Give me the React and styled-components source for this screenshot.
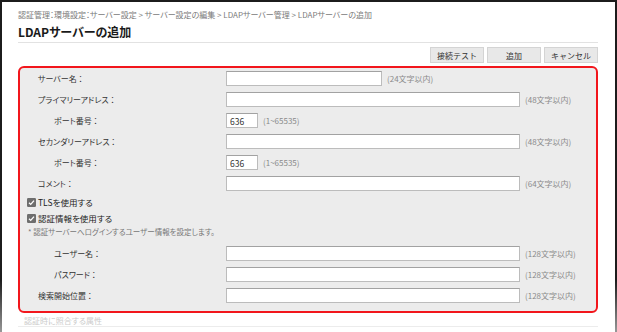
import React from 'react';
import styled, { createGlobalStyle } from 'styled-components';

const GlobalStyle = createGlobalStyle`
  html, body {
    margin: 0;
    padding: 0;
    background: #fff;
  }
  body {
    font-family: "Noto Sans CJK JP", "Noto Sans", sans-serif;
    font-feature-settings: "palt";
    color: #333;
  }
  * {
    box-sizing: border-box;
  }
`;

const Frame = styled.div`
  width: 617px;
  height: 332px;
  overflow: hidden;
  background: #fff;
  border-style: solid;
  border-width: 2px 2px 0 2px;
  border-image: linear-gradient(to bottom, #1c1c1c 84%, #9a9a9a 100%) 1;
  padding: 0 17px 0 16px;
`;

const Breadcrumb = styled.div`
  padding-top: 7px;
  font-size: 8px;
  line-height: 12px;
  color: #7a7a7a;
  white-space: nowrap;
`;

const Title = styled.h1`
  margin: 3px 0 0;
  padding-bottom: 2px;
  font-size: 12px;
  line-height: 16px;
  font-weight: bold;
  color: #1a1a1a;
  border-bottom: 1px solid #e2e2e2;
`;

const Toolbar = styled.div`
  display: flex;
  justify-content: flex-end;
  gap: 3px;
  margin-top: 4px;
`;

const Button = styled.button`
  width: 54px;
  height: 16px;
  padding: 0;
  background: #e8e8e8;
  border: 1px solid #d4d4d4;
  font-family: inherit;
  font-size: 8px;
  color: #333;
`;

const Panel = styled.div`
  margin-top: 3px;
  padding-bottom: 5px;
  background: #ececec;
  border: 2px solid #f2161c;
  border-radius: 6px;
`;

const Row = styled.div`
  display: flex;
  align-items: center;
  height: 21px;
  padding-left: 18px;
`;

const Label = styled.div`
  width: 188px;
  padding-left: ${p => (p.$indent ? 16 : 0)}px;
  font-size: 8px;
  color: #333;
  white-space: nowrap;
`;

const Field = styled.input`
  width: ${p => p.$w}px;
  height: 15px;
  margin: 0;
  padding: 0 3px;
  background: #fff;
  border: 1px solid #bcbcbc;
  border-top-color: #a2a2a2;
  font-family: inherit;
  font-size: 8.5px;
  color: #333;
  outline: none;
`;

const Hint = styled.span`
  margin-left: 5px;
  font-size: 8px;
  color: #8a8a8a;
  white-space: nowrap;
`;

const CheckRow = styled.label`
  display: flex;
  align-items: center;
  gap: 2px;
  height: 16px;
  padding-left: 7px;
  font-size: 8.5px;
  color: #222;
`;

const Note = styled.div`
  margin-bottom: 6px;
  padding-left: 8px;
  font-size: 7.5px;
  line-height: 11px;
  color: #777;
`;

const Faded = styled.div`
  margin-top: 2px;
  padding-left: 6px;
  font-size: 8px;
  line-height: 11px;
  color: #cbcbcb;
  border-bottom: 1px solid #ececec;
`;

function CheckMark() {
  return (
    <svg width="9" height="9" viewBox="0 0 9 9">
      <rect x="0" y="0" width="9" height="9" rx="1.2" fill="#6e6e6e" />
      <path d="M2 4.8 L3.7 6.4 L7 2.6" fill="none" stroke="#fff" strokeWidth="1.3" />
    </svg>
  );
}

function FieldRow({ label, indent, width, value, hint }) {
  return (
    <Row>
      <Label $indent={indent}>{label}</Label>
      <Field $w={width} defaultValue={value || ''} readOnly />
      {hint && <Hint>{hint}</Hint>}
    </Row>
  );
}

export default function App() {
  return (
    <Frame>
      <GlobalStyle />
      <Breadcrumb>
        認証管理：環境設定：サーバー設定 &gt; サーバー設定の編集 &gt; LDAPサーバー管理 &gt; LDAPサーバーの追加
      </Breadcrumb>
      <Title>LDAPサーバーの追加</Title>
      <Toolbar>
        <Button>接続テスト</Button>
        <Button>追加</Button>
        <Button>キャンセル</Button>
      </Toolbar>
      <Panel>
        <FieldRow label="サーバー名 ：" width={156} hint="(24文字以内)" />
        <FieldRow label="プライマリーアドレス ：" width={294} hint="(48文字以内)" />
        <FieldRow label="ポート番号 ：" indent width={32} value="636" hint="(1~65535)" />
        <FieldRow label="セカンダリーアドレス ：" width={294} hint="(48文字以内)" />
        <FieldRow label="ポート番号 ：" indent width={32} value="636" hint="(1~65535)" />
        <FieldRow label="コメント ：" width={294} hint="(64文字以内)" />
        <CheckRow>
          <CheckMark />
          TLSを使用する
        </CheckRow>
        <CheckRow>
          <CheckMark />
          認証情報を使用する
        </CheckRow>
        <Note>* 認証サーバーへログインするユーザー情報を設定します。</Note>
        <FieldRow label="ユーザー名 ：" indent width={294} hint="(128文字以内)" />
        <FieldRow label="パスワード ：" indent width={294} hint="(128文字以内)" />
        <FieldRow label="検索開始位置 ：" width={294} hint="(128文字以内)" />
      </Panel>
      <Faded>認証時に照合する属性</Faded>
    </Frame>
  );
}
